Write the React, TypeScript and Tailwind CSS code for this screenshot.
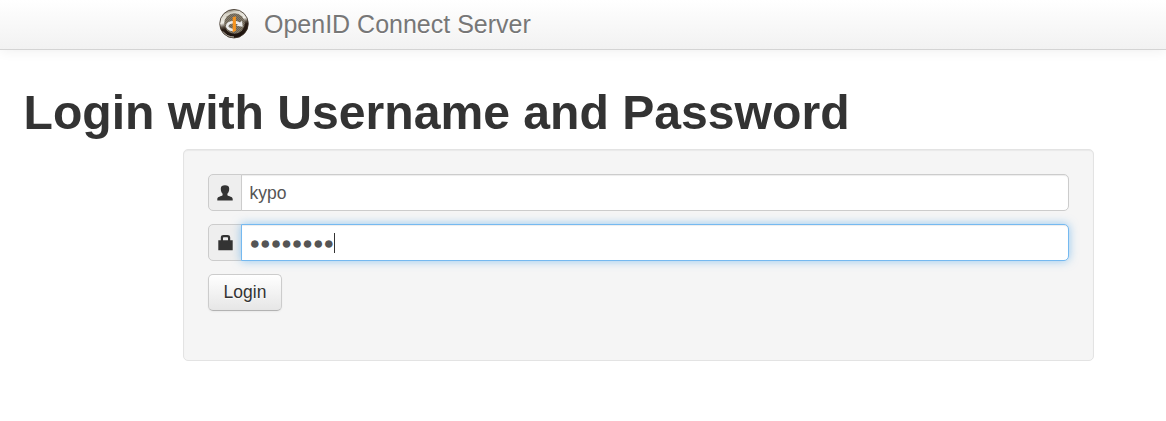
import React from "react";

function Logo() {
  return (
    <svg className="h-[30px] w-[30px] shrink-0" viewBox="0 0 30 30">
      <defs>
        <linearGradient id="rim" x1="0.3" y1="0" x2="0.55" y2="1">
          <stop offset="0" stopColor="#6f6758" />
          <stop offset="0.14" stopColor="#d8d4c8" />
          <stop offset="0.4" stopColor="#f1efe8" />
          <stop offset="0.54" stopColor="#5a4f43" />
          <stop offset="0.62" stopColor="#2a1d15" />
          <stop offset="1" stopColor="#1b110c" />
        </linearGradient>
        <pattern id="mesh" width="2" height="2" patternUnits="userSpaceOnUse">
          <rect width="2" height="2" fill="#857c6c" />
          <rect width="1" height="1" fill="#6a6253" />
          <rect x="1" y="1" width="1" height="1" fill="#6a6253" />
        </pattern>
      </defs>
      <circle cx="15" cy="14.7" r="14.3" fill="url(#rim)" stroke="#3b3127" strokeWidth="0.8" />
      <path d="M4 22.500Q8 28 15 28" fill="none" stroke="#b9b4a8" strokeWidth="1" />
      <circle cx="15.5" cy="14.5" r="10.3" fill="url(#mesh)" shapeRendering="geometricPrecision" />
      <path d="M14.500 21C9.500 20.700 7.700 18.400 8.300 16.300C9.500 12.800 16 12 21 14.800" fill="none" stroke="#ececec" strokeWidth="2.600" />
      <path d="M17.500 16.800L23.700 17.700L23 11.800Z" fill="#ececec" />
      <path d="M13.700 8.300L16.900 7.300V21.800L13.700 23.300Z" fill="#f7941e" />
    </svg>
  );
}

function UserIcon() {
  return (
    <svg className="h-[18px] w-[18px]" viewBox="0 0 18 18" fill="#333">
      <path d="M9 1.200C11.600 1.200 13.200 2.300 13.200 4.500C13.200 7 12.700 8.500 11.400 9.800V11.200C12.800 12.300 16.700 12.600 16.700 15V16.400H1.300V15C1.300 12.600 5.200 12.300 6.600 11.200V9.800C5.300 8.500 4.800 7 4.800 4.500C4.800 2.300 6.400 1.200 9 1.200Z" />
    </svg>
  );
}

function LockIcon() {
  return (
    <svg className="h-[18px] w-[18px]" viewBox="0 0 18 18" fill="#333">
      <path fillRule="evenodd" d="M2.300 6.300H4.800V3.500C4.800 1.800 5.800 1 7.500 1H11.500C13.200 1 14.200 1.800 14.200 3.500V6.300H16.700V16.300H2.300ZM7 6.300H12V4Q12 3.200 11.200 3.200H7.800Q7 3.200 7 4Z" />
    </svg>
  );
}

function AddOn({ children }: { children: React.ReactNode }) {
  return (
    <span className="-mr-px flex w-[34px] shrink-0 items-center justify-center rounded-l-[5px] border border-[#ccc] bg-[#eee]">
      {children}
    </span>
  );
}

export default function App() {
  return (
    <div className="min-h-[421px] bg-white font-['Liberation_Sans',Arial,sans-serif] text-[17.5px] text-[#333]">
      <header className="flex h-[50px] items-center gap-[15px] border-b border-[#d4d4d4] bg-linear-to-b from-white to-[#f2f2f2] pb-px pl-[219px] shadow-[0_1px_12px_rgba(0,0,0,0.065)]">
        <Logo />
        <span className="text-[25px] leading-[25px] text-[#777] [text-shadow:0_1px_0_#fff]">OpenID Connect Server</span>
      </header>
      <main className="pt-[37px]">
        <h1 className="pl-[23.5px] text-[48.125px] leading-[50px] font-bold whitespace-nowrap">Login with Username and Password</h1>
        <form className="mt-3 mr-[72px] ml-[183px] flex h-[212px] flex-col gap-[13px] rounded-[5px] border border-[#e3e3e3] bg-[#f5f5f5] p-6 shadow-[inset_0_1px_1px_rgba(0,0,0,0.05)]">
          <div className="flex h-[37px]">
            <AddOn><UserIcon /></AddOn>
            <input
              type="text"
              defaultValue="kypo"
              className="min-w-0 flex-1 rounded-r-[5px] border border-[#ccc] bg-white px-[7.5px] pt-0.5 text-[#555] shadow-[inset_0_1px_1px_rgba(0,0,0,0.075)] outline-none"
            />
          </div>
          <div className="flex h-[37px]">
            <AddOn><LockIcon /></AddOn>
            <div className="z-10 flex min-w-0 flex-1 items-center rounded-r-[5px] border border-[#75b9f0] bg-white pl-[7.5px] text-[#555] shadow-[inset_0_1px_1px_rgba(0,0,0,0.075),0_0_10px_rgba(82,168,236,0.6)]">
              <span className="leading-5">●●●●●●●●</span>
              <span className="h-5 w-px bg-[#333]" />
            </div>
          </div>
          <button
            type="button"
            className="h-[37px] w-[74px] rounded-[5px] border border-[#ccc] border-b-[#b3b3b3] bg-linear-to-b from-white to-[#e6e6e6] pb-px shadow-[inset_0_1px_0_rgba(255,255,255,0.2),0_1px_2px_rgba(0,0,0,0.05)] [text-shadow:0_1px_1px_rgba(255,255,255,0.75)]"
          >
            Login
          </button>
        </form>
      </main>
    </div>
  );
}
